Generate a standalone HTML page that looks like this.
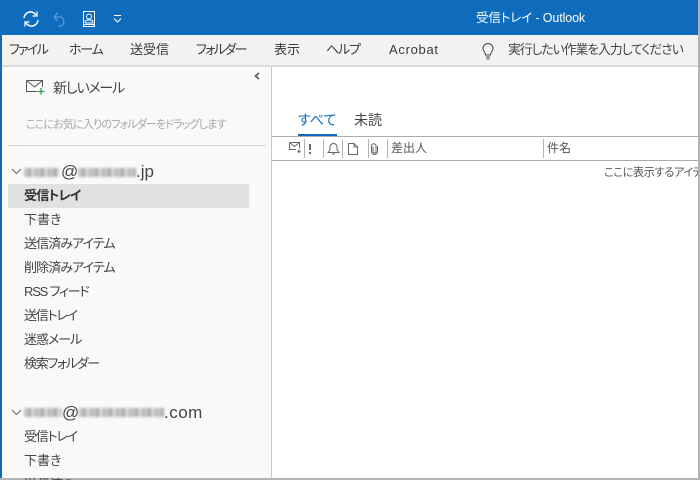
<!DOCTYPE html>
<html lang="ja"><head><meta charset="utf-8">
<style>
html,body{margin:0;padding:0;background:#fff}
#r{position:relative;width:700px;height:480px;overflow:hidden;background:#fff;font-family:"Liberation Sans","Noto Sans CJK JP",sans-serif;color:#333;font-feature-settings:"palt" 1}
#r div{position:absolute;white-space:nowrap}
.m{font-size:13px;line-height:18px;top:41px;color:#3a3a3a}
.f{font-size:13px;line-height:18px;left:24px;color:#444}
.blur{height:9px;filter:blur(1.300px);background:repeating-linear-gradient(90deg,#c4c4c4 0 4px,#a9a9a9 4px 7px,#d6d6d6 7px 11px,#b4b4b4 11px 13px)}
svg{position:absolute;overflow:visible}
</style></head><body>
<div id="r">
<div style="left:0;top:0;width:700px;height:35px;background:#0f6cbd"></div>
<div style="left:0;top:35px;width:700px;height:30px;background:#f3f2f1"></div>
<div style="left:0;top:65px;width:700px;height:2px;background:#dcdcdc"></div>
<div style="left:2px;top:67px;width:270px;height:411px;background:#faf9f8"></div>
<div style="left:271px;top:67px;width:1px;height:411px;background:#c8c8c8"></div>
<div style="left:0;top:0;width:2px;height:480px;background:#0f6cbd"></div>
<div style="left:698px;top:0;width:2px;height:480px;background:#b4b4b4"></div>
<div style="left:0;top:478px;width:700px;height:2px;background:#b4b4b4"></div>

<svg style="left:22px;top:10px" width="18" height="18" viewBox="0 0 18 18" fill="none" stroke="#fff" stroke-width="1.5"><path d="M2 8A6.500 6.500 0 0 1 14 5M16 10A6.500 6.500 0 0 1 4 13"/><path d="M15 1.500V6H10.500M3 16.500V12H7.500" stroke-width="1.300"/></svg>
<svg style="left:52px;top:10px" width="16" height="18" viewBox="0 0 16 18" fill="none" stroke="#4f94d4" stroke-width="1.500"><path d="M2 7L6 11M2 7L6 2.500M2 7H9A5 5 0 0 1 9 16H6"/></svg>
<svg style="left:83px;top:11px" width="12" height="16" viewBox="0 0 12 16" fill="none" stroke="#fff" stroke-width="1"><rect x=".5" y=".5" width="11" height="15"/><circle cx="6" cy="5.500" r="2.500"/><path d="M2 12C2 9 4 9 6 9S10 9 10 12H2M.5 13.500H11.500"/></svg>
<svg style="left:113px;top:15px" width="9" height="8" viewBox="0 0 9 8" fill="none" stroke="#fff" stroke-width="1"><path d="M1 .500H8"/><path d="M1 3.500L4.500 7L8 3.500"/></svg>
<div style="left:476px;top:9px;font-size:12.500px;line-height:18px;color:#fff;letter-spacing:-.12px">受信トレイ - Outlook</div>

<div class="m" style="left:9px;letter-spacing:-1.700px">ファイル</div>
<div class="m" style="left:69px;letter-spacing:-1.200px">ホーム</div>
<div class="m" style="left:130px">送受信</div>
<div class="m" style="left:196px;letter-spacing:-1.600px">フォルダー</div>
<div class="m" style="left:274px">表示</div>
<div class="m" style="left:326px;letter-spacing:-1.200px">ヘルプ</div>
<div class="m" style="left:389px;letter-spacing:.7px">Acrobat</div>
<svg style="left:481px;top:43px" width="14" height="18" viewBox="0 0 14 18" fill="none" stroke="#444" stroke-width="1"><path d="M4.500 12C4.500 9 2 8.500 2 5.500A5 5 0 0 1 12 5.500C12 8.500 9.500 9 9.500 12ZM5 14H9M5.500 16H8.500"/></svg>
<div class="m" style="left:508px;color:#444;font-size:12.800px;letter-spacing:-1px">実行したい作業を入力してください</div>

<svg style="left:254px;top:72px" width="6" height="8" viewBox="0 0 6 8" fill="none" stroke="#555" stroke-width="1.600"><path d="M5 1L1.500 4L5 7"/></svg>

<svg style="left:26px;top:79px" width="19" height="16" viewBox="0 0 19 16" fill="none" stroke="#555" stroke-width="1"><path d="M.5 1.500H16.500V8M.5 1.500V12.500H11M.5 1.500L8.500 8L16.500 1.500"/><path d="M15 9V15.500M11.500 12.500H18.500" stroke="#2f9a52" stroke-width="1.300"/></svg>
<div style="left:53px;top:78px;font-size:14px;line-height:20px;color:#444;letter-spacing:-1.200px">新しいメール</div>
<div style="left:26px;top:117px;font-size:11.200px;line-height:16px;color:#a8a8a8;letter-spacing:-1px">ここにお気に入りのフォルダーをドラッグします</div>
<div style="left:8px;top:145px;width:258px;height:1px;background:#d6d6d6"></div>

<svg style="left:11px;top:168px" width="11" height="7" viewBox="0 0 11 7" fill="none" stroke="#666" stroke-width="1"><path d="M1 1L5.500 5.500L10 1"/></svg>
<div class="blur" style="left:24px;top:168px;width:35px"></div>
<div style="left:61px;top:161px;font-size:17px;line-height:22px;color:#444">@</div>
<div class="blur" style="left:78px;top:168px;width:58px"></div>
<div style="left:136px;top:161px;font-size:17px;line-height:22px;color:#444">.jp</div>

<div style="left:8px;top:184px;width:241px;height:24px;background:#e1e1e1"></div>
<div class="f" style="top:187px;font-weight:700;color:#333;letter-spacing:-.8px">受信トレイ</div>
<div class="f" style="top:211px">下書き</div>
<div class="f" style="top:235px;letter-spacing:-.9px">送信済みアイテム</div>
<div class="f" style="top:259px;letter-spacing:-.9px">削除済みアイテム</div>
<div class="f" style="top:283px;letter-spacing:-1.200px">RSS フィード</div>
<div class="f" style="top:307px;letter-spacing:-1.200px">送信トレイ</div>
<div class="f" style="top:331px;letter-spacing:-1px">迷惑メール</div>
<div class="f" style="top:355px;letter-spacing:-1.300px">検索フォルダー</div>

<svg style="left:11px;top:409px" width="11" height="7" viewBox="0 0 11 7" fill="none" stroke="#666" stroke-width="1"><path d="M1 1L5.500 5.500L10 1"/></svg>
<div class="blur" style="left:24px;top:408px;width:38px"></div>
<div style="left:62px;top:402px;font-size:17px;line-height:22px;color:#444">@</div>
<div class="blur" style="left:79px;top:408px;width:85px"></div>
<div style="left:164px;top:402px;font-size:17px;line-height:22px;color:#444;letter-spacing:.5px">.com</div>
<div class="f" style="top:428px;letter-spacing:-1.200px">受信トレイ</div>
<div class="f" style="top:452px">下書き</div>
<div class="f" style="top:476px">送信済み</div>

<div style="left:298px;top:110px;font-size:14px;line-height:20px;color:#0f6cbd">すべて</div>
<div style="left:354px;top:110px;font-size:14px;line-height:20px;color:#444">未読</div>
<div style="left:298px;top:134px;width:39px;height:2px;background:#0f6cbd"></div>
<div style="left:272px;top:136px;width:426px;height:1px;background:#a8abb0"></div>
<div style="left:272px;top:160px;width:426px;height:1px;background:#a8abb0"></div>

<svg style="left:289px;top:142px" width="13" height="12" viewBox="0 0 13 12" fill="none" stroke="#666" stroke-width="1"><path d="M.5 .500H10.500V6M.5 .500V7.500H7M.5 .500L5.500 4.500L10.500 .500M10 7V10.500M8.500 9L10 10.500L11.500 9"/></svg>
<div style="left:304px;top:139px;width:1px;height:19px;background:#b4b4b4"></div>
<div style="left:309px;top:144px;width:2px;height:6px;background:#666"></div>
<div style="left:309px;top:152px;width:2px;height:2px;background:#666"></div>
<div style="left:323px;top:139px;width:1px;height:19px;background:#b4b4b4"></div>
<svg style="left:327px;top:142px" width="13" height="13" viewBox="0 0 13 13" fill="none" stroke="#666" stroke-width="1"><path d="M1 10.500H12L10 8V5A3.500 3.500 0 0 0 3 5V8ZM5 12H8M6.500 .500V1.500"/></svg>
<div style="left:342px;top:139px;width:1px;height:19px;background:#b4b4b4"></div>
<svg style="left:348px;top:143px" width="10" height="12" viewBox="0 0 10 12" fill="none" stroke="#666" stroke-width="1"><path d="M.5 .500H6L9.500 4V11.500H.500ZM6 .500V4H9.500"/></svg>
<div style="left:368px;top:139px;width:1px;height:19px;background:#b4b4b4"></div>
<svg style="left:370px;top:143px" width="9" height="12" viewBox="0 0 9 12" fill="none" stroke="#666" stroke-width="1"><path d="M3 3.500V8.500A1.500 1.500 0 0 0 6 8.500V3A2.200 2.200 0 0 0 1.500 3V8.500A3 3 0 0 0 7.500 8.500V3"/></svg>
<div style="left:387px;top:139px;width:1px;height:19px;background:#b4b4b4"></div>
<div style="left:391px;top:140px;font-size:12px;line-height:17px;color:#555">差出人</div>
<div style="left:543px;top:139px;width:1px;height:19px;background:#b4b4b4"></div>
<div style="left:547px;top:140px;font-size:12px;line-height:17px;color:#555">件名</div>
<div style="left:604px;top:165px;width:94px;overflow:hidden;font-size:11.200px;line-height:16px;color:#555;letter-spacing:-.4px">ここに表示するアイテムはありません</div>
</div>
</body></html>
